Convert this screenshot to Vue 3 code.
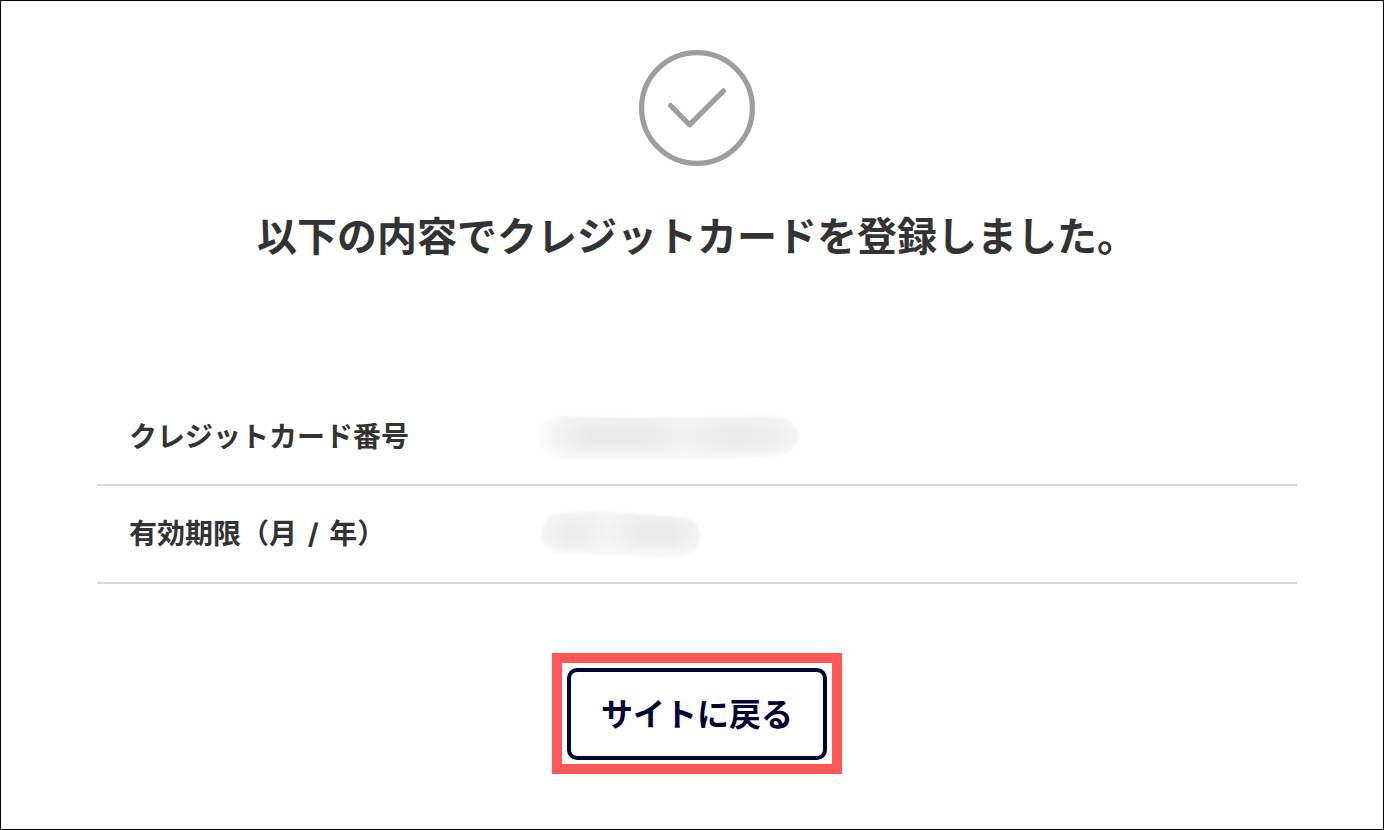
<script setup>
const heading = '以下の内容でクレジットカードを登録しました。'
</script>

<template>
  <main class="page">
    <svg class="check" viewBox="0 0 116 116" aria-hidden="true">
      <circle cx="58" cy="58" r="55.4" />
      <path d="M31.5 55.5 L50.5 74.8 L84.5 40.8" />
    </svg>
    <h1 class="title">{{ heading }}</h1>
    <table class="details">
      <tbody>
        <tr>
          <th scope="row">クレジットカード番号</th>
          <td>
            <svg class="mask" viewBox="0 0 270 48" role="img" aria-label="非表示">
              <defs>
                <linearGradient id="number-fill">
                  <stop offset="0" stop-color="#fdfdfd" />
                  <stop offset="0.1" stop-color="#f1f1f1" />
                  <stop offset="0.2" stop-color="#eaeaea" />
                  <stop offset="0.4" stop-color="#eaeaea" />
                  <stop offset="0.57" stop-color="#f1f1f1" />
                  <stop offset="0.75" stop-color="#ebebeb" />
                  <stop offset="0.88" stop-color="#ededed" />
                  <stop offset="1" stop-color="#f4f4f4" />
                </linearGradient>
                <linearGradient id="shade" x1="0" y1="0" x2="0" y2="1">
                  <stop offset="0" stop-color="#fefefe" stop-opacity="0.35" />
                  <stop offset="0.35" stop-color="#fefefe" stop-opacity="0" />
                  <stop offset="0.6" stop-color="#fefefe" stop-opacity="0" />
                  <stop offset="1" stop-color="#fefefe" stop-opacity="0.65" />
                </linearGradient>
                <filter id="edge" x="-10%" y="-20%" width="120%" height="140%">
                  <feGaussianBlur stdDeviation="0.8" />
                </filter>
              </defs>
              <g filter="url(#edge)">
                <path fill="url(#number-fill)" d="M20 4 C90 6 160 6 238 4 C268 5 268 43 238 44 C180 46 90 48 25 46 C-8 42 -8 6 20 4Z" />
                <path fill="url(#shade)" d="M20 4 C90 6 160 6 238 4 C268 5 268 43 238 44 C180 46 90 48 25 46 C-8 42 -8 6 20 4Z" />
              </g>
            </svg>
          </td>
        </tr>
        <tr>
          <th scope="row">有効期限（月<span class="slash">&nbsp;/&nbsp;</span>年）</th>
          <td>
            <svg class="mask" viewBox="0 0 270 48" role="img" aria-label="非表示">
              <defs>
                <linearGradient id="expiry-fill">
                  <stop offset="0" stop-color="#f5f5f5" />
                  <stop offset="0.18" stop-color="#ececec" />
                  <stop offset="0.42" stop-color="#f3f3f3" />
                  <stop offset="0.65" stop-color="#ebebeb" />
                  <stop offset="0.8" stop-color="#eaeaea" />
                  <stop offset="1" stop-color="#f3f3f3" />
                </linearGradient>
              </defs>
              <g filter="url(#edge)">
                <path fill="url(#expiry-fill)" d="M24 3 C50 1 85 1 108 5 L144 7 C170 10 169 44 144 47 C105 48 80 42 24 43 C-2 42 -2 5 24 3Z" />
                <path fill="url(#shade)" d="M24 3 C50 1 85 1 108 5 L144 7 C170 10 169 44 144 47 C105 48 80 42 24 43 C-2 42 -2 5 24 3Z" />
              </g>
            </svg>
          </td>
        </tr>
      </tbody>
    </table>
    <div class="highlight">
      <button type="button" class="back">サイトに戻る</button>
    </div>
  </main>
</template>

<style>
body {
  margin: 0;
  background: #fefefe;
}
</style>

<style scoped>
.page {
  box-sizing: border-box;
  min-height: 100vh;
  display: flex;
  flex-direction: column;
  align-items: center;
  padding: 49px 86px 48px 96px;
  border: 1px solid #000;
  color: #333;
  font-family: "Noto Sans CJK JP", sans-serif;
}

.check {
  width: 116px;
  height: 116px;
  fill: none;
  stroke: #9e9e9e;
  stroke-width: 5.2;
  stroke-linecap: round;
  stroke-linejoin: round;
}

.title {
  margin: 38px 0 0;
  font-size: 40px;
  line-height: 60px;
  font-weight: 700;
  white-space: nowrap;
}

.details {
  width: 100%;
  margin-top: 124px;
  border-collapse: separate;
  border-spacing: 0;
}

th,
td {
  box-sizing: border-box;
  height: 98px;
  padding: 0;
  border-bottom: 2px solid #d8d8d8;
  vertical-align: middle;
}

th {
  width: 440px;
  padding: 0 0 2px 32px;
  text-align: left;
  font-size: 28px;
  line-height: 42px;
  font-weight: 700;
}

.slash {
  margin: 0 4px;
  font-family: Inter, sans-serif;
}

.mask {
  display: block;
  width: 270px;
  height: 48px;
}

.highlight {
  margin-top: 69px;
  padding: 5px 5px 4px;
  border: 10px solid #ff5757;
}

.back {
  display: block;
  box-sizing: border-box;
  width: 260px;
  height: 92px;
  padding: 0 0 4px;
  border: 4px solid #000033;
  border-radius: 10px;
  background: #fefefe;
  color: #000033;
  font-family: inherit;
  font-size: 32px;
  line-height: 48px;
  font-weight: 700;
}
</style>
